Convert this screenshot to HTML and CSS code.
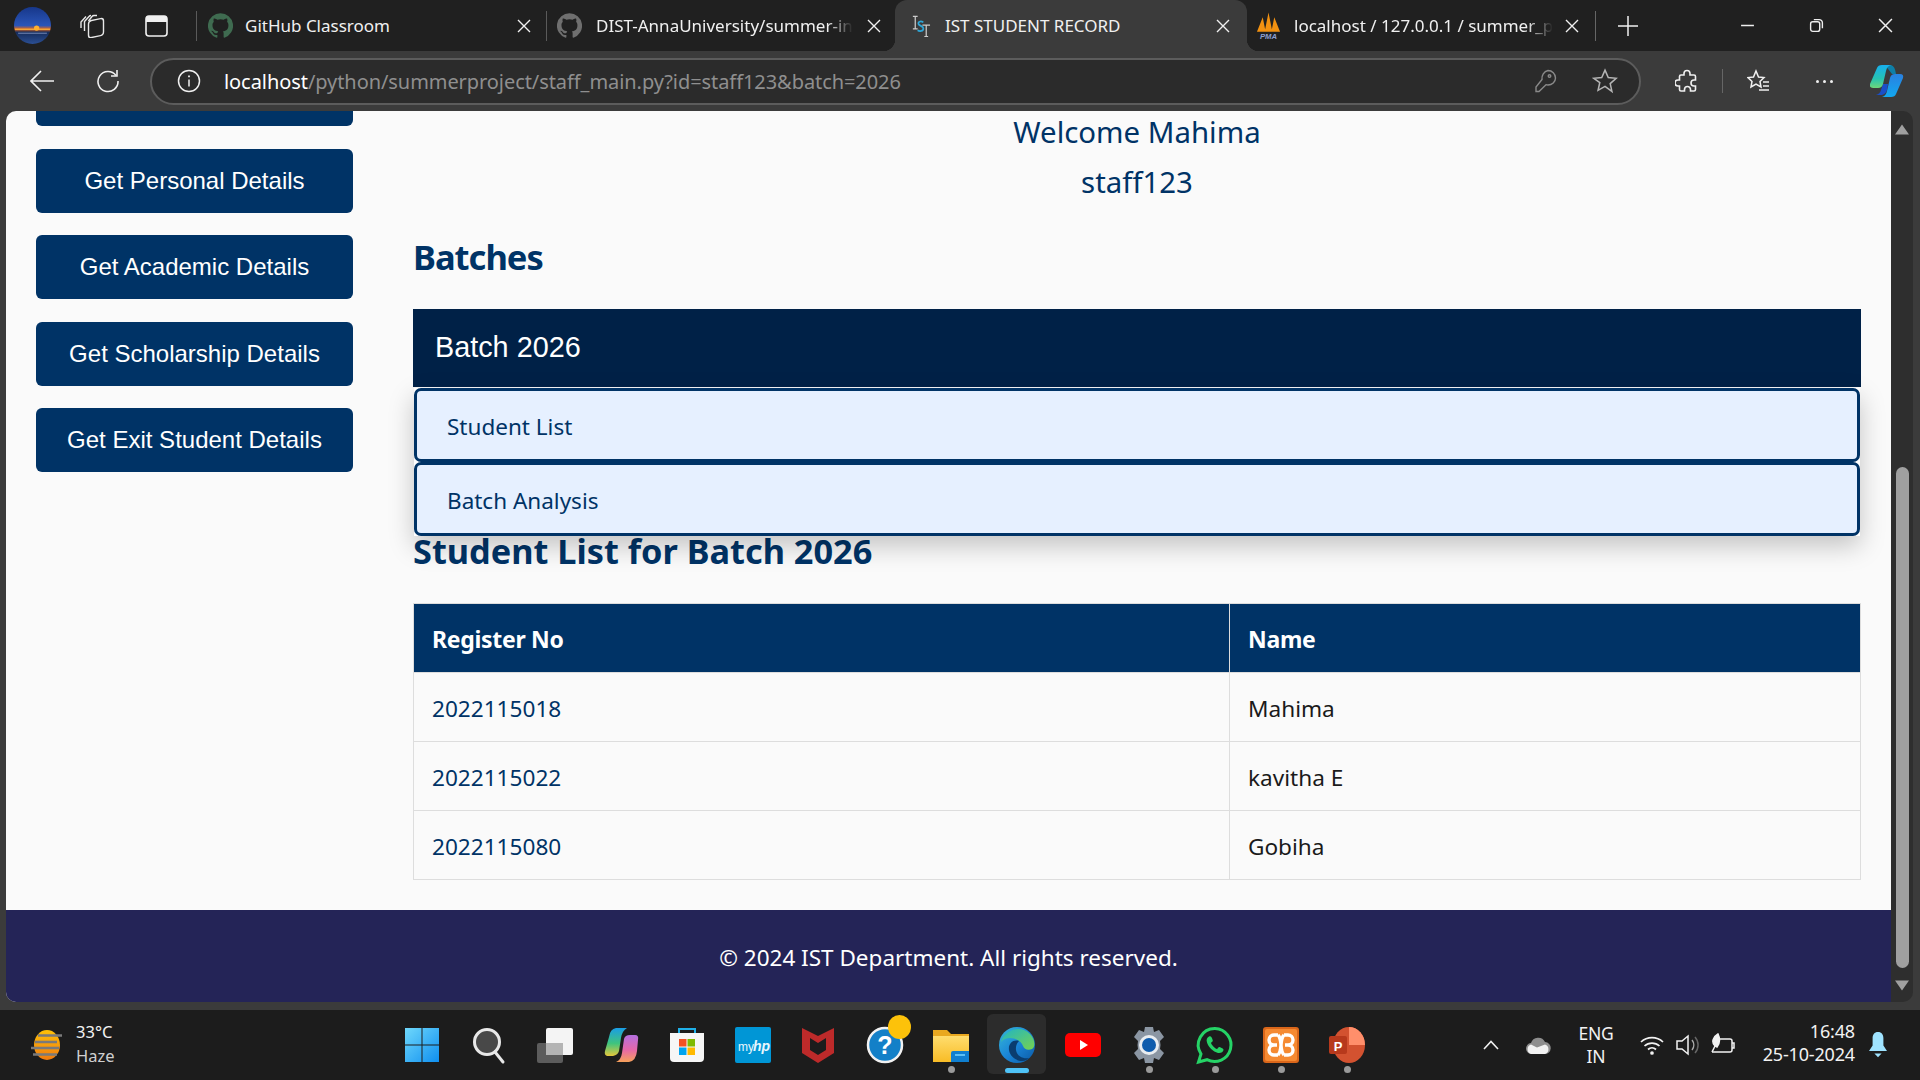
FILE: index.html
```html
<!DOCTYPE html>
<html lang="en">
<head>
<meta charset="utf-8">
<title>IST STUDENT RECORD</title>
<link rel="stylesheet" href="styles.css">
</head>
<body>
<svg class="defs" aria-hidden="true"><defs>
<symbol id="gh" viewBox="0 0 24 24"><path d="M12 .3a12 12 0 0 0-3.8 23.4c.6.1.8-.3.8-.6v-2c-3.3.7-4-1.6-4-1.6-.6-1.4-1.4-1.8-1.4-1.8-1-.7.1-.7.1-.7 1.2 0 1.9 1.2 1.9 1.2 1 1.8 2.8 1.3 3.5 1 0-.8.4-1.3.7-1.6-2.7-.3-5.5-1.3-5.5-6 0-1.2.5-2.3 1.3-3.1-.2-.4-.6-1.6 0-3.2 0 0 1-.3 3.4 1.2a11.5 11.5 0 0 1 6 0c2.3-1.5 3.3-1.2 3.3-1.2.6 1.6.2 2.8 0 3.2.9.8 1.3 1.9 1.3 3.2 0 4.6-2.8 5.6-5.5 5.9.5.4.9 1 .9 2.2v3.3c0 .3.1.7.8.6A12 12 0 0 0 12 .3"/></symbol>
<symbol id="x" viewBox="0 0 14 14"><path d="M1 1l12 12M13 1L1 13" fill="none" stroke="currentColor" stroke-width="1.4"/></symbol>
<linearGradient id="prof" x1="0" y1="0" x2="0" y2="1"><stop offset="0" stop-color="#17378a"/><stop offset=".5" stop-color="#2a55b8"/><stop offset=".6" stop-color="#e0671e"/><stop offset=".68" stop-color="#152c5c"/><stop offset="1" stop-color="#2b4f94"/></linearGradient>
<linearGradient id="win" x1="0" y1="0" x2="1" y2="1"><stop offset="0" stop-color="#6fd8fb"/><stop offset="1" stop-color="#0f8ff0"/></linearGradient>
<linearGradient id="cop1" x1="0" y1="0" x2="0" y2="1"><stop offset="0" stop-color="#1a9de6"/><stop offset=".55" stop-color="#3fc47d"/><stop offset="1" stop-color="#e5c73c"/></linearGradient>
<linearGradient id="cop2" x1="0" y1="0" x2="0" y2="1"><stop offset="0" stop-color="#b46fe0"/><stop offset=".55" stop-color="#e668a8"/><stop offset="1" stop-color="#f6a15a"/></linearGradient>
<linearGradient id="cop3" x1="0" y1="0" x2="0" y2="1"><stop offset="0" stop-color="#17b0ee"/><stop offset=".6" stop-color="#27c3b0"/><stop offset="1" stop-color="#6ed67a"/></linearGradient>
<linearGradient id="cop4" x1="0" y1="0" x2="0" y2="1"><stop offset="0" stop-color="#2a80e0"/><stop offset="1" stop-color="#12a8f0"/></linearGradient>
<linearGradient id="edge" x1="0" y1="0" x2="1" y2="1"><stop offset="0" stop-color="#37b8d6"/><stop offset=".5" stop-color="#1a86d8"/><stop offset="1" stop-color="#0c59a4"/></linearGradient>
<linearGradient id="edge2" x1="0" y1="0" x2="1" y2="1"><stop offset="0" stop-color="#1fb4c6"/><stop offset="1" stop-color="#76d34f"/></linearGradient>
<linearGradient id="sun" x1="0" y1="0" x2="0" y2="1"><stop offset="0" stop-color="#ffc107"/><stop offset="1" stop-color="#ef7a10"/></linearGradient>
<linearGradient id="fold" x1="0" y1="0" x2="0" y2="1"><stop offset="0" stop-color="#ffdd6e"/><stop offset="1" stop-color="#f8bc26"/></linearGradient>
</defs></svg>

<header class="tabstrip">
  <div class="strip-left">
    <svg class="profile" viewBox="0 0 36 36"><circle cx="18" cy="18" r="18" fill="url(#prof)"/><rect x="1" y="21" width="34" height="1.4" fill="#f2a53a"/><circle cx="22" cy="20.500" r="2.600" fill="#ffb02e"/><rect x="4" y="25" width="28" height="1" fill="#7488b5"/></svg>
    <svg class="ic-coll" viewBox="0 0 25 24" fill="none" stroke="#e8e8e8" stroke-width="1.400"><rect x="8.500" y="6" width="15" height="17" rx="3" transform="skewY(-12) translate(0 3)"/><path d="M8.500 7 12 2.500a3 3 0 0 1 2-1h3"/><path d="M4.500 17V7.500L9 2.500a3 3 0 0 1 2-1"/><path d="M1 14V8l5-5.500"/></svg>
    <svg class="ic-vtabs" viewBox="0 0 23 22"><rect x="1" y="1" width="21" height="20" rx="3" fill="none" stroke="#f0f0f0" stroke-width="1.600"/><path d="M1 4a3 3 0 0 1 3-3h15a3 3 0 0 1 3 3v3H1z" fill="#f0f0f0"/></svg>
  </div>
  <div class="tab tab-a">
    <svg class="tab-ic ic-green"><use href="#gh"/></svg>
    <span class="tab-title">GitHub Classroom</span>
    <svg class="tab-x"><use href="#x"/></svg>
  </div>
  <div class="tab tab-b">
    <svg class="tab-ic ic-gray"><use href="#gh"/></svg>
    <span class="tab-title tab-fade">DIST-AnnaUniversity/summer-in</span>
    <svg class="tab-x"><use href="#x"/></svg>
  </div>
  <div class="tab tab-c">
    <svg class="tab-ic" viewBox="0 0 22 24"><path d="M3 2h5M5.500 2v13M3 15h5" stroke="#ccc" stroke-width="1.300" fill="none"/><path d="M14 8c-3-1.500-6-.500-5 2 .8 2 5 2 5 4.500 0 3-4 3.500-6 2" stroke="#2ea7d8" stroke-width="1.800" fill="none"/><path d="M13 11h8M17 11v12M15 23h4" stroke="#ccc" stroke-width="1.300" fill="none"/></svg>
    <span class="tab-title">IST STUDENT RECORD</span>
    <svg class="tab-x"><use href="#x"/></svg>
  </div>
  <div class="tab tab-d">
    <svg class="tab-ic ic-pma" viewBox="0 0 26 28"><path d="M1 20 7 5l3 15zM9 20 13 0l4 20zM16 20l3-15 6 15z" fill="#f29111"/><text x="13" y="27.500" class="pma">PMA</text></svg>
    <span class="tab-title tab-fade">localhost / 127.0.0.1 / summer_p</span>
    <svg class="tab-x"><use href="#x"/></svg>
  </div>
  <i class="strip-sep"></i>
  <svg class="ic-plus" viewBox="0 0 20 20"><path d="M10 0v20M0 10h20" stroke="#f0f0f0" stroke-width="1.500"/></svg>
  <div class="winctl">
    <svg viewBox="0 0 14 14"><path d="M1 7h12" stroke="#eee" stroke-width="1.400"/></svg>
    <svg viewBox="0 0 14 14" fill="none" stroke="#eee" stroke-width="1.300"><rect x="1.500" y="3.500" width="8.500" height="9" rx="2"/><path d="M4.500 1.500h5a3 3 0 0 1 3 3v5"/></svg>
    <svg class="wc-close"><use href="#x" color="#eee"/></svg>
  </div>
</header>

<nav class="toolbar">
  <div class="tool"><svg class="i24" viewBox="0 0 24 24" fill="none" stroke="#f0f0f0" stroke-width="1.600"><path d="M24 12H1M11 2 1 12l10 10"/></svg></div>
  <div class="tool"><svg class="i24" viewBox="0 0 24 24" fill="none" stroke="#f0f0f0" stroke-width="1.600"><path d="M20 6.500A10 10 0 1 0 22 12"/><path d="M21 1v6h-6"/></svg></div>
  <div class="address">
    <svg class="i24" viewBox="0 0 24 24" fill="none" stroke="#f0f0f0" stroke-width="1.500"><circle cx="12" cy="12" r="10.500"/><path d="M12 10.500v7"/><path d="M12 6.500v1.800" stroke-width="1.800"/></svg>
    <span class="url"><b>localhost</b>/python/summerproject/staff_main.py?id=staff123&amp;batch=2026</span>
    <svg class="i24 key" viewBox="0 0 24 24" fill="none" stroke="#8a8a8a" stroke-width="1.400"><path d="M15 1.500a7.500 7.500 0 0 1 7.500 7.500c0 4-3.500 7-7.500 7a8 8 0 0 1-2-.3L6 22.500H3V18L9 10.500A8 8 0 0 1 15 1.500z"/><circle cx="16.500" cy="7" r="1.300"/></svg>
    <svg class="i26 star" viewBox="0 0 24 24" fill="none" stroke="#b5b5b5" stroke-width="1.400"><path d="M12 2l3 6.800 7.300.7-5.500 4.900 1.600 7.200L12 17l-6.400 3.600 1.600-7.200L1.700 9.500 9 8.800z"/></svg>
  </div>
  <div class="tool tool-ext"><svg class="i24" viewBox="0 0 24 24" fill="none" stroke="#f0f0f0" stroke-width="1.600"><path d="M9 4.500a3 3 0 0 1 6 0V6h4a1.500 1.500 0 0 1 1.500 1.500V11H19a3 3 0 0 0 0 6h1.500v3.500A1.500 1.500 0 0 1 19 22h-3.500v-1.500a3 3 0 0 0-6 0V22H6a1.500 1.500 0 0 1-1.500-1.500V17H3a3 3 0 0 1 0-6h1.500V7.500A1.500 1.500 0 0 1 6 6h3z"/></svg></div>
  <i class="tool-sep"></i>
  <div class="tool tool-fav"><svg class="i24" viewBox="0 0 24 24" fill="none" stroke="#f0f0f0" stroke-width="1.500"><path d="M9 2l2.500 6 5.500.6-4 3.900 1 5.500L9 15l-5 3 1-5.500-4-3.900 5.500-.6z"/><path d="M16 13h6M16 17h6M12 21h10"/></svg></div>
  <div class="tool tool-more"><span></span><span></span><span></span></div>
  <div class="tool tool-cop"><svg class="copilot" viewBox="0 0 34 32"><path d="M15 0h6q4 1 5 9h-4z" fill="#0e7fa8"/><path d="M13 19l-2 6q-1 4-5 5h6q4-1 5-5l1-6z" fill="#1a4fc8"/><path d="M26 29q-1 3-5 3H12q4-1 5-6l3-13q1-4 5-4h5q4 0 3 4z" fill="url(#cop4)"/><path d="M7 3q1-3 5-3h9q-4 1-5 6l-3 13q-1 4-5 4H3q-4 0-3-4z" fill="url(#cop3)"/></svg></div>
</nav>

<div class="window">
  <div class="viewport">
    <div class="content">
      <aside class="sidebar">
        <div class="side-stub"></div>
        <a class="side-btn">Get Personal Details</a>
        <a class="side-btn">Get Academic Details</a>
        <a class="side-btn">Get Scholarship Details</a>
        <a class="side-btn">Get Exit Student Details</a>
      </aside>
      <main class="main">
        <p class="welcome">Welcome Mahima</p>
        <p class="welcome">staff123</p>
        <h2 class="h-batches">Batches</h2>
        <div class="batch">
          <div class="batch-head">Batch 2026</div>
          <div class="dropdown">
            <a class="drop-item">Student List</a>
            <a class="drop-item">Batch Analysis</a>
          </div>
        </div>
        <h2 class="h-list">Student List for Batch 2026</h2>
        <table class="students">
          <colgroup><col class="col-reg"><col></colgroup>
          <thead><tr><th>Register No</th><th>Name</th></tr></thead>
          <tbody>
            <tr><td class="reg">2022115018</td><td>Mahima</td></tr>
            <tr><td class="reg">2022115022</td><td>kavitha E</td></tr>
            <tr><td class="reg">2022115080</td><td>Gobiha</td></tr>
          </tbody>
        </table>
      </main>
    </div>
    <footer class="foot">© 2024 IST Department. All rights reserved.</footer>
  </div>
  <div class="scrollbar">
    <svg class="sb-arrow" viewBox="0 0 14 11"><path d="M7 .5 14 10.500H0z" fill="#a0a0a0"/></svg>
    <div class="sb-track"><div class="sb-thumb"></div></div>
    <svg class="sb-arrow" viewBox="0 0 14 11"><path d="M7 10.500 14 .5H0z" fill="#a0a0a0"/></svg>
  </div>
</div>

<div class="taskbar">
  <div class="weather">
    <svg class="wx" viewBox="0 0 34 30"><ellipse cx="17" cy="15" rx="13" ry="15" fill="url(#sun)"/><path d="M8 5.500h24M5 12h22M1 18h28M3 24.500h24" stroke="#7a7a7a" stroke-width="2.600"/></svg>
    <div class="wx-text"><span>33°C</span><span>Haze</span></div>
  </div>
  <div class="apps">
    <div class="app"><svg class="ti ti-win" viewBox="0 0 36 36"><path d="M1 1h16.500v16.500H1zM18.500 1H35v16.500H18.500zM1 18.500h16.500V35H1zM18.500 18.500H35V35H18.500z" fill="url(#win)"/></svg></div>
    <div class="app"><svg class="ti" viewBox="0 0 36 36"><circle cx="16" cy="15" r="12.500" fill="#484848" stroke="#e8e8e8" stroke-width="3"/><path d="M24 25l8 10" stroke="#e8e8e8" stroke-width="3" stroke-linecap="round"/></svg></div>
    <div class="app"><svg class="ti" viewBox="0 0 36 36"><rect x="0" y="16" width="26" height="20" rx="2" fill="#5c5c5c"/><rect x="9" y="1" width="27" height="27" rx="2" fill="#f4f4f4"/><rect x="9" y="16" width="17" height="12" fill="#b4b4b4"/></svg></div>
    <div class="app"><svg class="ti" viewBox="0 0 36 36"><path d="M6 10Q7 2 13 1h11q-5 3-6 10l-2 13q-1 4-6 5H4q-3-1-2-5z" fill="url(#cop1)"/><path d="M34 24q-1 10-8 11H13q5-2 6-9l2-14q1-4 6-4h5q4 0 3 5z" fill="url(#cop2)"/></svg></div>
    <div class="app"><svg class="ti" viewBox="0 0 36 36"><path d="M10 6V2h16v4" fill="none" stroke="#1fb0e8" stroke-width="2"/><path d="M1 6h34v25a4 4 0 0 1-4 4H5a4 4 0 0 1-4-4z" fill="#f6f6f6"/><path d="M10 12h7.500v7.500H10z" fill="#f25022"/><path d="M18.500 12H26v7.500h-7.500z" fill="#7fba00"/><path d="M10 20.500h7.500V28H10z" fill="#00a4ef"/><path d="M18.500 20.500H26V28h-7.500z" fill="#ffb900"/></svg></div>
    <div class="app"><svg class="ti" viewBox="0 0 36 36"><rect width="36" height="36" rx="2" fill="#0096d6"/><text x="3" y="24" class="myhp">my</text><text x="18" y="24" class="myhp myhp-b">hp</text></svg></div>
    <div class="app"><svg class="ti" viewBox="0 0 36 36"><path d="M1 1l16 8 16-8v25L17 36 1 26z" fill="#bd2a2a"/><path d="M9 11l8 5 8-5v12l-8 5-8-5z" fill="#1c1c1c"/></svg></div>
    <div class="app"><svg class="ti ti-help" viewBox="0 0 44 48"><circle cx="18" cy="30" r="17" fill="#1380c8" stroke="#f2f2f2" stroke-width="2.500"/><text x="18" y="39" class="help-q">?</text><ellipse cx="32.500" cy="12" rx="11.500" ry="12" fill="#fdc20a"/></svg></div>
    <div class="app"><svg class="ti" viewBox="0 0 36 36"><path d="M0 3h14l4 4h18v27H0z" fill="#e9a820"/><rect y="9" width="36" height="26" fill="url(#fold)"/><path d="M18 35v-9q0-2 2-2h16v11z" fill="#0f7fd0"/><rect x="22" y="27" width="10" height="2" fill="#5cc0f5"/></svg><i class="dot"></i></div>
    <div class="app app-active"><svg class="ti" viewBox="0 0 36 36"><circle cx="18" cy="18" r="18" fill="url(#edge)"/><path d="M2 15C5 3 22-3 31 7c6 6 5 14 2 15-4 2-8 0-9-3C22 12 8 7 2 15z" fill="url(#edge2)"/><path d="M20 14c-6-2-11 3-10 9 1 7 8 11 13 11 3 0 6-2 7-3-5 1-12-1-13-8-.5-4 1-7 3-9z" fill="#0a3d70"/></svg><i class="dash"></i></div>
    <div class="app"><svg class="ti ti-yt" viewBox="0 0 36 24"><rect width="36" height="24" rx="5" fill="#f00"/><path d="M15 7l8 5-8 5z" fill="#fff"/></svg></div>
    <div class="app"><svg class="ti" viewBox="0 0 36 36"><path d="M14 0h8l1 5 5-2 5 7-4 4 .5 4-.5 4 4 4-5 7-5-2-1 5h-8l-1-5-5 2-5-7 4-4-.5-4 .5-4-4-4 5-7 5 2z" fill="#8b96a3"/><circle cx="18" cy="18" r="10" fill="#e9edf1"/><circle cx="18" cy="18" r="7" fill="#0f5cad"/></svg><i class="dot"></i></div>
    <div class="app"><svg class="ti" viewBox="0 0 36 36"><path d="M18 1.500A16.500 16.500 0 0 0 4 27L1.500 35l8.500-2.300A16.500 16.500 0 1 0 18 1.500z" fill="#1c1c1c" stroke="#25d366" stroke-width="3"/><path d="M12 9.500c-2 1-3 3-2 6 1.500 5 6 9 11 10.500 3 .5 5-1 5.500-3 .2-1-.5-1.500-4-3-1-.3-1.500 1.500-2.500 2-2-.5-5-3.500-6-6 .5-1 2-1.500 1.800-2.500-1-3.500-2-4.800-3.800-4z" fill="#25d366"/></svg><i class="dot"></i></div>
    <div class="app"><svg class="ti" viewBox="0 0 36 36"><rect width="36" height="36" rx="3" fill="#d9661a"/><rect x="2" y="2" width="32" height="32" rx="2" fill="#f58a32"/><path d="M15 8h-4a4.500 4.500 0 0 0 0 10h3M11 18a4.500 4.500 0 0 0 0 10h4M21 8h4a4.500 4.500 0 0 1 0 10h-3M25 18a4.500 4.500 0 0 1 0 10h-4M15 8c5 5 1 15 6 20M21 8c-5 5-1 15-6 20" fill="none" stroke="#fff" stroke-width="3.400"/></svg><i class="dot"></i></div>
    <div class="app"><svg class="ti" viewBox="0 0 36 36"><ellipse cx="20" cy="18" rx="16" ry="18" fill="#d35230"/><path d="M20 0a16 18 0 0 1 16 18H20z" fill="#ff8f6b"/><rect x="0" y="9" width="18" height="18" rx="2" fill="#b7391c"/><text x="9" y="23.500" class="ppt">P</text></svg><i class="dot"></i></div>
  </div>
  <div class="tray">
    <svg class="tr-chev" viewBox="0 0 16 10"><path d="M1 9l7-7.500L15 9" fill="none" stroke="#f0f0f0" stroke-width="1.600"/></svg>
    <svg class="tr-cloud" viewBox="0 0 26 20"><path d="M7 19a5.500 5.500 0 0 1-1-11 7.500 7.500 0 0 1 14-1 6 6 0 0 1-.5 12z" fill="#8e8e8e"/><path d="M6 19a5 5 0 0 1 0-9.500l6 3 8-3a5 5 0 0 1 0 9.500z" fill="#f2f2f2"/></svg>
    <div class="tr-lang"><span>ENG</span><span>IN</span></div>
    <svg class="tr-wifi" viewBox="0 0 24 20" fill="none" stroke="#f2f2f2" stroke-width="1.700"><path d="M1 7a16 16 0 0 1 22 0M4.500 11a11 11 0 0 1 15 0M8 14.500a6 6 0 0 1 8 0"/><circle cx="12" cy="18" r="1" fill="#f2f2f2"/></svg>
    <svg class="tr-vol" viewBox="0 0 24 26" fill="none" stroke="#f2f2f2" stroke-width="1.500"><path d="M1 9h5l6-5v18l-6-5H1z"/><path d="M16 8a8 8 0 0 1 0 10" stroke="#aaa"/><path d="M19 5a12 12 0 0 1 0 16" stroke="#666"/></svg>
    <svg class="tr-batt" viewBox="0 0 26 24" fill="none" stroke="#f2f2f2" stroke-width="1.500"><path d="M8 6h13a2 2 0 0 1 2 2v9a2 2 0 0 1-2 2H3"/><path d="M23 10h2v5h-2"/><path d="M9 1C4 4 2 9 6 13l2 1c3-4 3-9 1-13z" fill="#f2f2f2"/><path d="M6 13 3 19"/></svg>
    <div class="tr-clock"><span>16:48</span><span>25-10-2024</span></div>
    <svg class="tr-bell" viewBox="0 0 22 30"><path d="M11 0c-4 0-6 3-6 7v8l-4 6h20l-4-6V7c0-4-2-7-6-7z" fill="#9fe3ff"/><path d="M7 24h8l-4 4z" fill="#9fe3ff"/></svg>
  </div>
</div>
</body>
</html>
```

FILE: styles.css
```css
* { box-sizing: border-box; }
html, body { margin: 0; padding: 0; }
body {
  width: 1920px; height: 1080px; overflow: hidden;
  display: flex; flex-direction: column;
  background: #3b3b3b;
  font-family: "Noto Sans", "Open Sans", sans-serif;
}
.defs { width: 0; height: 0; display: block; }

/* tab strip */
.tabstrip { height: 51px; background: #202020; display: flex; align-items: center; flex: none; }
.strip-left { width: 197px; height: 51px; display: flex; align-items: center; position: relative; flex: none; }
.strip-left::after, .tab-a::after { content: ""; position: absolute; right: 0; top: 11px; width: 1px; height: 30px; background: #5a5a5a; }
.profile { width: 37px; height: 37px; margin-left: 14px; flex: none; }
.ic-coll { width: 25px; height: 24px; margin-left: 29px; flex: none; }
.ic-vtabs { width: 23px; height: 22px; margin-left: 40px; flex: none; }
.tab { height: 51px; display: flex; align-items: center; color: #f0f0f0; position: relative; flex: none; }
.tab-a { width: 350px; padding: 0 16px 0 11px; }
.tab-b { width: 348px; padding: 0 14px 0 10px; }
.tab-c { width: 352px; padding: 0 17px 0 15px; background: #3b3b3b; border-radius: 12px 12px 0 0; }
.tab-d { width: 348px; padding: 0 16px 0 9px; }
.tab-c::before, .tab-c::after { content: ""; position: absolute; bottom: 0; width: 12px; height: 12px; }
.tab-c::before { left: -12px; background: radial-gradient(circle at 0 0, transparent 12px, #3b3b3b 12.5px); }
.tab-c::after { right: -12px; background: radial-gradient(circle at 100% 0, transparent 12px, #3b3b3b 12.5px); }
.tab-ic { width: 25px; height: 25px; flex: none; }
.ic-green { fill: #3f6b50; }
.ic-gray { fill: #6f6f6f; }
.tab-c .tab-ic { width: 21px; height: 24px; }
.ic-pma { height: 28px; }
.tab-title { font-size: 17px; white-space: nowrap; margin-left: 12px; }
.tab-b .tab-title { margin-left: 14px; }
.tab-c .tab-title { margin-left: 14px; }
.tab-d .tab-title { margin-left: 13px; }
.tab-fade { -webkit-mask-image: linear-gradient(90deg, #000 90%, transparent); mask-image: linear-gradient(90deg, #000 90%, transparent); }
.tab-x { width: 14px; height: 14px; flex: none; color: #f0f0f0; margin-left: auto; }
.strip-sep { width: 1px; height: 30px; background: #666; flex: none; }
.ic-plus { width: 20px; height: 20px; margin-left: 22px; flex: none; }
.winctl { margin-left: auto; display: flex; align-items: center; gap: 54px; padding-right: 27px; }
.winctl svg { width: 15px; height: 15px; flex: none; }

/* toolbar */
.toolbar { height: 60px; display: flex; align-items: center; background: #3b3b3b; flex: none; padding-left: 12px; }
.tool { width: 60px; height: 46px; display: flex; align-items: center; justify-content: center; flex: none; }
.tool + .tool { margin-left: 6px; }
.i24 { width: 24px; height: 24px; flex: none; }
.i26 { width: 26px; height: 26px; flex: none; }
.address { width: 1491px; height: 47px; margin-left: 12px; background: #2b2b2b; border: 2px solid #5c5c5c; border-radius: 24px; display: flex; align-items: center; padding: 0 21px 0 25px; flex: none; }
.url { margin-left: 23px; font-size: 20px; color: #8f8f8f; white-space: nowrap; letter-spacing: -.07px; }
.url b { font-weight: 400; color: #fff; }
.key { margin-left: auto; margin-right: 2px; }
.star { margin-left: 33px; }
.tool.tool-ext { margin-left: 16px; }
.tool-sep { width: 1px; height: 24px; background: #666; margin-left: 5px; flex: none; }
.tool.tool-fav { margin-left: 6px; }
.tool.tool-more { gap: 4px; margin-left: 5px; }
.tool-more span { width: 3px; height: 3px; border-radius: 50%; background: #f0f0f0; }
.tool.tool-cop { margin-left: 3px; }
.copilot { width: 34px; height: 32px; }

/* page */
.window { height: 891px; margin: 0 7px 0 6px; display: flex; flex: none; }
.viewport { width: 1885px; display: flex; flex-direction: column; background: #fafafa; border-radius: 10px 0 0 10px; overflow: hidden; }
.content { height: 799px; display: flex; padding: 0 30px; overflow: hidden; flex: none; }
.sidebar { width: 317px; display: flex; flex-direction: column; gap: 22.33px; flex: none; }
.side-stub { height: 15px; margin-bottom: .67px; background: #003366; border-radius: 0 0 6px 6px; flex: none; }
.side-btn { height: 64px; background: #003366; color: #fff; border-radius: 6px; display: flex; align-items: center; justify-content: center; font-family: "Liberation Sans", Arial, sans-serif; font-size: 24px; flex: none; }
.main { width: 1448px; margin-left: 60px; flex: none; color: #003366; }
.welcome { margin: -1px 0 1px; height: 50px; line-height: 44px; text-align: center; font-size: 29.4px; }
.h-batches { margin: 17px 0 22px; height: 60px; line-height: 60px; font-size: 34.5px; font-weight: 700; letter-spacing: -1px; }
.batch { position: relative; }
.batch-head { height: 78px; background: #002147; color: #fff; font-family: "Liberation Sans", Arial, sans-serif; font-size: 28.8px; display: flex; align-items: center; padding: 0 0 2px 22px; }
.dropdown { position: absolute; left: 1px; right: 1px; top: 79px; z-index: 2; display: flex; flex-direction: column; box-shadow: 0 10px 24px rgba(0,0,0,.22); background: #fff; }
.drop-item { height: 74px; background: #e6f0ff; border: 3px solid #003366; border-radius: 7px; display: flex; align-items: center; padding: 2px 0 0 30px; font-size: 22.5px; color: #003366; flex: none; }
.h-list { margin: 139px 0 27px; height: 50px; line-height: 50px; font-size: 34.3px; font-weight: 700; }
.students { width: 1448px; border-collapse: collapse; table-layout: fixed; font-size: 22.6px; color: #1a1a1a; }
.col-reg { width: 816px; }
.students th, .students td { height: 69px; padding: 2px 18px 0; border: 1px solid #ddd; text-align: left; }
.students th { background: #003366; color: #fff; font-weight: 700; font-size: 23px; letter-spacing: -.3px; }
.students td.reg { color: #003366; }
.foot { height: 92px; background: #242457; color: #fff; display: flex; align-items: center; justify-content: center; padding-top: 2px; font-size: 22.5px; flex: none; }

.scrollbar { width: 22px; background: #2e2e2e; border-radius: 0 10px 10px 0; display: flex; flex-direction: column; align-items: center; padding: 13px 0 11px; flex: none; }
.sb-arrow { width: 14px; height: 11px; flex: none; }
.sb-track { flex: 1; width: 13px; display: flex; flex-direction: column; justify-content: flex-end; padding-bottom: 12px; }
.sb-thumb { height: 501px; background: #a0a0a0; border-radius: 7px; }

/* taskbar */
.taskbar { height: 70px; margin-top: 8px; background: #1c1c1c; display: flex; align-items: center; flex: none; color: #f2f2f2; }
.weather { width: 390px; display: flex; align-items: center; padding-left: 29px; flex: none; }
.wx { width: 36px; height: 30px; flex: none; }
.wx-text { display: flex; flex-direction: column; margin: -3px 0 0 11px; font-size: 16.5px; line-height: 24px; }
.wx-text span:last-child { color: #cfcfcf; }
.apps { display: flex; flex: none; height: 70px; }
.app { width: 66px; height: 70px; display: flex; align-items: center; justify-content: center; position: relative; flex: none; }
.app-active::before { content: ""; position: absolute; left: 3px; right: 4px; top: 4px; bottom: 6px; background: #2c2c2c; border-radius: 6px; }
.ti { width: 36px; height: 36px; position: relative; overflow: visible; }
.ti-win { margin-right: 3px; }
.ti-help { width: 44px; height: 48px; margin-left: 8px; margin-top: -12px; }
.ti-yt { height: 24px; }
.dot { position: absolute; left: 30px; bottom: 7px; width: 7px; height: 7px; border-radius: 50%; background: #9a9a9a; }
.dash { position: absolute; left: 21px; bottom: 7px; width: 24px; height: 5px; border-radius: 3px; background: #4fc3f7; }
.myhp { font: 400 12px "Liberation Sans", sans-serif; fill: #e8f6fd; }
.myhp-b { font-weight: 700; font-style: italic; font-size: 14px; }
.help-q { font: 700 25px "Liberation Sans", sans-serif; fill: #fff; text-anchor: middle; }
.ppt { font: 700 13px "Liberation Sans", sans-serif; fill: #fff; text-anchor: middle; }
.pma { font: italic 700 8px "Liberation Sans", sans-serif; fill: #8c9fd0; text-anchor: middle; }

.tray { display: flex; align-items: center; flex: 1; height: 70px; position: relative; }
.tr-chev { width: 16px; height: 10px; margin-left: 103px; flex: none; }
.tr-cloud { width: 26px; height: 20px; margin-left: 26px; flex: none; }
.tr-lang { width: 46px; margin-left: 22px; display: flex; flex-direction: column; align-items: center; font-size: 17.5px; line-height: 23px; flex: none; letter-spacing: -.2px; }
.tr-wifi { width: 24px; height: 20px; margin-left: 21px; flex: none; }
.tr-vol { width: 24px; height: 26px; margin-left: 12px; flex: none; }
.tr-batt { width: 26px; height: 24px; margin-left: 9px; flex: none; }
.tr-clock { margin-left: auto; display: flex; flex-direction: column; align-items: flex-end; padding-bottom: 4px; font-size: 18px; line-height: 23px; letter-spacing: -.17px; }
.tr-bell { width: 20px; height: 27px; margin: 0 32px 0 13px; flex: none; }
```
